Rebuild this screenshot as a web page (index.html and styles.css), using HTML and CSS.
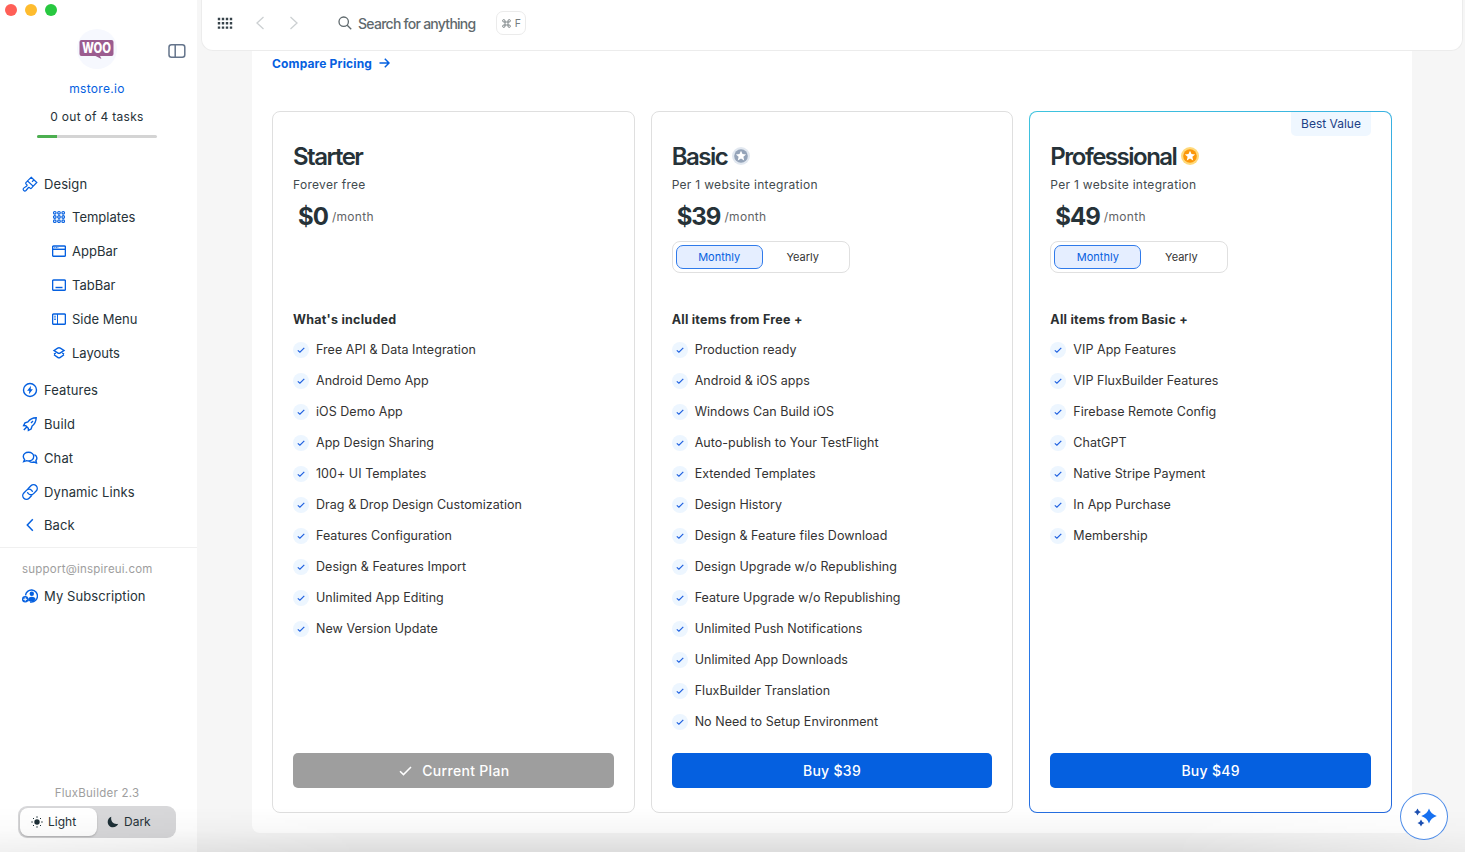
FILE: index.html
```
<!DOCTYPE html>
<html lang="en">
<head>
<meta charset="utf-8">
<title>FluxBuilder</title>
<link rel="stylesheet" href="styles.css">
</head>
<body>
<svg class="defs" width="0" height="0">
  <symbol id="tick" viewBox="0 0 16 16"><circle cx="8" cy="8" r="8" fill="#edf6ff"/><path d="M4.800 8.400 6.900 10.200 11.300 5.900" fill="none" stroke="#1d5fe0" stroke-width="1.200"/></symbol>
  <symbol id="badge" viewBox="0 0 18 18"><circle cx="9" cy="9" r="9" class="halo"/><circle cx="9" cy="9" r="6.800" fill="currentColor"/><path fill="#fff" d="m9 3.700 1.500 3.300 3.600.4-2.700 2.400.8 3.600L9 11.600l-3.200 1.800.8-3.600L3.900 7.400l3.600-.4z"/></symbol>
</svg>
<div class="app">
  <aside class="sidebar">
    <div class="lights"><i class="red"></i><i class="yellow"></i><i class="green"></i></div>
    <div class="brand">
      <svg class="woo" width="40" height="40" viewBox="0 0 40 40"><circle cx="20" cy="20" r="20" fill="#f6f8fe"/><path fill="#9b5c8f" d="M4.500 11h30a2 2 0 0 1 2 2v12a2 2 0 0 1-2 2h-11.500l1.500 3-6-3H4.500a2 2 0 0 1-2-2V13a2 2 0 0 1 2-2z"/><text x="19.500" y="24.200" text-anchor="middle" textLength="29" lengthAdjust="spacingAndGlyphs">WOO</text></svg>
      <svg class="collapse" width="18" height="14" viewBox="0 0 18 14" fill="none" stroke="#64748b" stroke-width="1.500"><rect x="1" y=".8" width="15.800" height="12.400" rx="2.500"/><path d="M7.200 1v12"/></svg>
    </div>
    <a class="site">mstore.io</a>
    <div class="tasks">0 out of 4 tasks</div>
    <div class="progress"><i></i></div>
    <nav class="nav">
      <a class="item first"><svg width="16" height="16" viewBox="0 0 16 16"><path stroke-width="1.200" d="m9.200 1.300 5.600 5.200-3.600 3.700-5.700-5.300zM12 3.900l-2 1.900M5.600 4.900 3.900 6.700c-.6.800.2 1.400.9 2 .5.600.3 1-.4 1.500l-2.700 1.900c-1.600 1.400.7 3.900 2.300 2.400L6.100 12c.6-.7 1-.8 1.500-.3.700.8 1.200 1.200 1.900.5l1.700-2"/></svg><span>Design</span></a>
      <a class="item sub"><svg width="14" height="14" viewBox="0 0 14 14"><g stroke-width="1.200"><circle cx="2.800" cy="2.800" r="1.300"/><circle cx="7" cy="2.800" r="1.300"/><circle cx="11.200" cy="2.800" r="1.300"/><circle cx="2.800" cy="7" r="1.300"/><circle cx="7" cy="7" r="1.300"/><circle cx="11.200" cy="7" r="1.300"/><circle cx="2.800" cy="11.200" r="1.300"/><circle cx="7" cy="11.200" r="1.300"/><circle cx="11.200" cy="11.200" r="1.300"/></g></svg><span>Templates</span></a>
      <a class="item sub"><svg width="14" height="14" viewBox="0 0 14 14"><rect x=".6" y="2" width="12.800" height="10.200" rx="1"/><path d="M1 5.300h12"/><path d="M2.300 3.700h4" stroke-width="1" stroke-dasharray="1 .6"/></svg><span>AppBar</span></a>
      <a class="item sub"><svg width="14" height="14" viewBox="0 0 14 14"><rect x=".6" y="2" width="12.800" height="10.200" rx="1"/><path d="M3.500 9.500h7"/></svg><span>TabBar</span></a>
      <a class="item sub"><svg width="14" height="14" viewBox="0 0 14 14"><rect x=".6" y="2" width="12.800" height="10.200" rx="1"/><path d="M5.500 2v10" stroke-width="1"/><path d="M3 3.700v5" stroke-width="1.500" stroke-dasharray="1 .7"/></svg><span>Side Menu</span></a>
      <a class="item sub"><svg width="14" height="14" viewBox="0 0 14 14"><path d="M2 4.500 5.700 2.200q1.300-.8 2.600 0L12 4.500 8.300 6.900q-1.300.8-2.600 0zM3.800 7 2 8.200M10.200 7 12 8.200M2 8.800l3.700 2.600q1.300.9 2.600 0L12 8.800"/></svg><span>Layouts</span></a>
      <a class="item main"><svg width="16" height="16" viewBox="0 0 16 16"><circle cx="8" cy="8" r="6.500"/><path d="M9 3.700 5.100 8.700h2.200L6.900 12.300 10.900 7.300H8.700z" fill="currentColor" stroke="none"/></svg><span>Features</span></a>
      <a class="item"><svg width="16" height="16" viewBox="0 0 16 16"><path d="M14.200 1.800c-3.800.1-6.400 1.500-8.300 4.100L3 6.900l-1.400 2.700 2.200.1 2.500 2.500.1 2.200 2.700-1.400 1-3c2.600-1.900 4-4.400 4.100-8.200zM4.500 11.200l-2.700 2.900M9 7l2-2"/></svg><span>Build</span></a>
      <a class="item"><svg width="16" height="16" viewBox="0 0 16 16"><path d="M6.500 2.300c3 0 5.200 1.800 5.200 4.300S9.500 11 6.500 11q-1 0-1.900-.3L1.700 11.700l.9-2.200Q1.300 8.300 1.300 6.600c0-2.500 2.200-4.300 5.200-4.300zM12.500 4.700c1.500.7 2.400 1.900 2.400 3.300q0 1.500-1 2.500l.6 2.400-2.500-.9q-2.600.9-4.500-.5"/></svg><span>Chat</span></a>
      <a class="item"><svg width="16" height="16" viewBox="0 0 16 16"><path transform="rotate(-45 8 8)" d="M7.400 11.700H3a3.700 3.700 0 0 1 0-7.400h3.600a3.700 3.700 0 0 1 3.700 3.700q0 .9-.4 1.700M8.600 4.300H13a3.700 3.700 0 0 1 0 7.400H9.400A3.700 3.700 0 0 1 5.700 8q0-.9.4-1.700"/></svg><span>Dynamic Links</span></a>
      <a class="item back"><svg width="16" height="16" viewBox="0 0 16 16"><path d="M10.800 2.300 5.300 8l5.500 5.700" stroke-width="1.500"/></svg><span>Back</span></a>
    </nav>
    <div class="account">
      <div class="mail">support@inspireui.com</div>
      <a class="item"><svg width="16" height="16" viewBox="0 0 16 16"><path d="M3.500 7.300a6 6 0 1 1 6 6.700H8"/><circle cx="9.800" cy="5.700" r="2.200" fill="currentColor" stroke="none"/><path d="M6.200 13.200V11c.5-1.500 2-2.200 3.600-2.200s3.300.7 3.800 2.200l-2 2.300z" fill="currentColor" stroke="none"/><circle cx="3.200" cy="11.300" r="3.200" fill="currentColor" stroke="none"/><path d="M1.300 11.300h3.800M3.200 9.400v3.800" stroke="#fff" stroke-width="1"/></svg><span>My Subscription</span></a>
    </div>
    <div class="version">FluxBuilder 2.3</div>
    <div class="theme">
      <button class="light"><svg width="12" height="12" viewBox="0 0 12 12"><circle cx="6" cy="6" r="2.700" fill="#1d2f36"/><path d="M6 .3v1.500M6 10.200v1.500M.3 6h1.500M10.200 6h1.500M2 2l1 1M9 9l1 1M2 10l1-1M9 3l1-1" stroke="#1d2f36"/></svg><span>Light</span></button>
      <button><svg width="12" height="12" viewBox="0 0 12 12"><path fill="#1d2f36" d="M4.300.8C2 1.700.7 3.700.7 6c0 3 2.400 5.300 5.300 5.300 2.400 0 4.300-1.300 5.200-3.500C7 9 3.200 5.500 4.300.8z"/></svg><span>Dark</span></button>
    </div>
  </aside>
  <div class="main-area">
    <header class="topbar">
      <svg class="grid" width="16" height="12" viewBox="0 0 16 12"><path d="M2 .800v11.200M6 .800v11.200M10 .800v11.200M14 .800v11.200" stroke="#37434a" stroke-width="2.400" stroke-dasharray="2.400 1.900"/></svg>
      <svg class="prev" width="10" height="14" viewBox="0 0 10 14"><path d="M8.500 1 2 7l6.500 6"/></svg>
      <svg class="next" width="10" height="14" viewBox="0 0 10 14"><path d="M1.500 1 8 7l-6.500 6"/></svg>
      <svg class="lens" width="14" height="14" viewBox="0 0 14 14" fill="none" stroke="#5f696d" stroke-width="1.300"><circle cx="5.700" cy="5.700" r="4.700"/><path d="m9.200 9.200 4 4"/></svg>
      <span class="search">Search for anything</span>
      <kbd><svg width="9" height="9" viewBox="0 0 9 9" fill="none" stroke="#757d80" stroke-width=".9"><path d="M3 3h3v3H3zM3 3H1.900A1.200 1.200 0 1 1 3 1.900zM6 3V1.900A1.200 1.200 0 1 1 7.100 3zM6 6h1.100A1.200 1.200 0 1 1 6 7.100zM3 6v1.100A1.200 1.200 0 1 1 1.900 6z"/></svg><span>F</span></kbd>
    </header>
    <main class="panel">
      <a class="compare"><span>Compare Pricing</span><svg width="11" height="10" viewBox="0 0 11 10" fill="none" stroke="#0560e0" stroke-width="1.500"><path d="M.5 5h9M5.800.8 10 5 5.800 9.200"/></svg></a>
      <div class="plans">
        <section class="plan">
          <h2>Starter</h2>
          <p class="note">Forever free</p>
          <div class="price"><b>$0</b><span>/month</span></div>
          <div class="period empty"></div>
          <h3>What's included</h3>
          <ul>
            <li><svg><use href="#tick"/></svg><span>Free API &amp; Data Integration</span></li>
            <li><svg><use href="#tick"/></svg><span>Android Demo App</span></li>
            <li><svg><use href="#tick"/></svg><span>iOS Demo App</span></li>
            <li><svg><use href="#tick"/></svg><span>App Design Sharing</span></li>
            <li><svg><use href="#tick"/></svg><span>100+ UI Templates</span></li>
            <li><svg><use href="#tick"/></svg><span>Drag &amp; Drop Design Customization</span></li>
            <li><svg><use href="#tick"/></svg><span>Features Configuration</span></li>
            <li><svg><use href="#tick"/></svg><span>Design &amp; Features Import</span></li>
            <li><svg><use href="#tick"/></svg><span>Unlimited App Editing</span></li>
            <li><svg><use href="#tick"/></svg><span>New Version Update</span></li>
          </ul>
          <button class="buy current"><svg width="13" height="10" viewBox="0 0 13 10"><path d="M1 5.200 4.500 8.600 12 1" fill="none" stroke="#fff" stroke-width="1.500"/></svg><span>Current Plan</span></button>
        </section>
        <section class="plan">
          <h2>Basic<svg class="silver"><use href="#badge"/></svg></h2>
          <p class="note">Per 1 website integration</p>
          <div class="price"><b>$39</b><span>/month</span></div>
          <div class="period"><span class="on">Monthly</span><span>Yearly</span></div>
          <h3>All items from Free +</h3>
          <ul>
            <li><svg><use href="#tick"/></svg><span>Production ready</span></li>
            <li><svg><use href="#tick"/></svg><span>Android &amp; iOS apps</span></li>
            <li><svg><use href="#tick"/></svg><span>Windows Can Build iOS</span></li>
            <li><svg><use href="#tick"/></svg><span>Auto-publish to Your TestFlight</span></li>
            <li><svg><use href="#tick"/></svg><span>Extended Templates</span></li>
            <li><svg><use href="#tick"/></svg><span>Design History</span></li>
            <li><svg><use href="#tick"/></svg><span>Design &amp; Feature files Download</span></li>
            <li><svg><use href="#tick"/></svg><span>Design Upgrade w/o Republishing</span></li>
            <li><svg><use href="#tick"/></svg><span>Feature Upgrade w/o Republishing</span></li>
            <li><svg><use href="#tick"/></svg><span>Unlimited Push Notifications</span></li>
            <li><svg><use href="#tick"/></svg><span>Unlimited App Downloads</span></li>
            <li><svg><use href="#tick"/></svg><span>FluxBuilder Translation</span></li>
            <li><svg><use href="#tick"/></svg><span>No Need to Setup Environment</span></li>
          </ul>
          <button class="buy">Buy $39</button>
        </section>
        <section class="plan best">
          <div class="ribbon">Best Value</div>
          <h2>Professional<svg class="gold"><use href="#badge"/></svg></h2>
          <p class="note">Per 1 website integration</p>
          <div class="price"><b>$49</b><span>/month</span></div>
          <div class="period"><span class="on">Monthly</span><span>Yearly</span></div>
          <h3>All items from Basic +</h3>
          <ul>
            <li><svg><use href="#tick"/></svg><span>VIP App Features</span></li>
            <li><svg><use href="#tick"/></svg><span>VIP FluxBuilder Features</span></li>
            <li><svg><use href="#tick"/></svg><span>Firebase Remote Config</span></li>
            <li><svg><use href="#tick"/></svg><span>ChatGPT</span></li>
            <li><svg><use href="#tick"/></svg><span>Native Stripe Payment</span></li>
            <li><svg><use href="#tick"/></svg><span>In App Purchase</span></li>
            <li><svg><use href="#tick"/></svg><span>Membership</span></li>
          </ul>
          <button class="buy">Buy $49</button>
        </section>
      </div>
    </main>
  </div>
  <div class="fade"></div>
  <button class="assist"><svg width="24" height="20" viewBox="0 0 24 20"><path fill="#1670f0" d="M16 1.500Q17.800 7.200 23.800 9 17.800 10.800 16 16.500 14.200 10.800 8.200 9 14.200 7.200 16 1.500z"/><path fill="#1c4fb0" d="M4.500 1.500Q5.300 4.200 8 5 5.300 5.800 4.500 8.500 3.700 5.800 1 5 3.700 4.200 4.500 1.500zM8 12.500q.8 2.700 3.500 3.500-2.700.8-3.500 3.500-.8-2.700-3.500-3.500 2.700-.8 3.500-3.500z"/></svg></button>
</div>
</body>
</html>
```
FILE: styles.css
```
* { box-sizing: border-box; }
body { margin: 0; font-family: Inter, "Liberation Sans", sans-serif; color: #263238; background: #f6f6f6; overflow: hidden; }
h2, h3, p, ul { margin: 0; padding: 0; }
button { border: 0; padding: 0; font-family: inherit; color: inherit; }
.defs { position: absolute; }
.app { position: relative; display: flex; width: 1465px; height: 852px; overflow: hidden; }

/* Sidebar */
.sidebar { width: 197px; height: 852px; background: #fff; display: flex; flex-direction: column; flex: none; }
.lights { display: flex; gap: 8px; padding: 4px 0 0 5px; height: 16px; }
.lights i { width: 12px; height: 12px; border-radius: 50%; }
.red { background: #ff5f57; }
.yellow { background: #febc2e; }
.green { background: #28c840; }
.brand { display: flex; align-items: center; height: 40px; margin-top: 13px; padding-left: 77px; }
.woo { overflow: visible; }
.woo text { font: 800 14px Inter, sans-serif; fill: #fff; }
.collapse { margin: 4px 0 0 51px; }
.site, .tasks { text-align: center; font-size: 12px; line-height: 20px; letter-spacing: .3px; padding-right: 3px; }
.site { color: #0560e0; margin-top: 10px; }
.tasks { margin-top: 8px; }
.progress { width: 120px; height: 3px; margin: 8px 0 0 37px; background: #d4d4d4; border-radius: 2px; overflow: hidden; }
.progress i { display: block; width: 20px; height: 3px; background: #4caf50; }
.nav { margin-top: 30px; height: 380px; border-bottom: 1px solid #f0f0f0; }
.item { display: flex; align-items: center; height: 34px; padding-left: 22px; gap: 6px; font-size: 13px; letter-spacing: .1px; }
.item svg { color: #0560e0; fill: none; stroke: currentColor; stroke-width: 1.400; flex: none; }
.item.first { height: 32px; }
.item.sub { padding-left: 52px; letter-spacing: 0; }
.item.main { margin-top: 3px; }
.item.back { height: 32px; }
.account { padding-top: 11px; }
.mail { font-size: 11.500px; line-height: 20px; letter-spacing: .22px; color: #9e9e9e; padding-left: 22px; }
.version { margin-top: auto; text-align: center; font-size: 11.500px; line-height: 18px; letter-spacing: .25px; color: #9e9e9e; padding-right: 3px; }
.theme { display: flex; width: 158px; height: 32px; margin: 4px 0 14px 18px; padding: 2px; background: #d8d8da; border-radius: 9px; font-size: 12px; }
.theme button { display: flex; align-items: center; gap: 5px; flex: 1; padding: 0 0 1px 8px; background: none; font-size: 12px; border-radius: 8px; }
.theme .light { flex: 0 0 77px; background: #fff; padding-left: 11px; box-shadow: 0 1px 2px rgba(0,0,0,.2); margin-right: 2px; }

/* Top bar */
.main-area { flex: 1; padding: 0 2px 0 4px; }
.topbar { display: flex; align-items: center; height: 51px; padding: 0 15px 4px 14px; background: #fff; border: 1px solid #ececec; border-top: 0; border-radius: 0 0 12px 12px; }
.prev, .next { fill: none; stroke: #ccd0d2; stroke-width: 1.300; }
.grid { margin-left: .5px; }
.prev { margin-left: 22px; }
.next { margin-left: 24px; }
.lens { margin-left: 39px; }
.search { margin-left: 6.500px; font-size: 14px; font-weight: 500; letter-spacing: -.74px; color: #5f696d; }
kbd { display: flex; align-items: center; justify-content: center; gap: 4px; width: 30px; height: 24px; margin-left: 21px; border: 1px solid #ebebeb; border-radius: 7px; font: 10.500px Inter, sans-serif; color: #757d80; }

/* Pricing panel */
.panel { width: 1160px; height: 782px; margin-left: 51px; padding: 2px 20px 20px; background: #fff; border-radius: 0 0 8px 8px; }
.compare { display: flex; align-items: center; gap: 7px; height: 20px; font-size: 12px; font-weight: 700; letter-spacing: .15px; color: #0560e0; }
.plans { display: grid; grid-template-columns: repeat(3, 1fr); gap: 16px; margin-top: 38px; }
.plan { position: relative; display: flex; flex-direction: column; height: 702px; padding: 28px 20px 24px; background: #fff; border: 1px solid #dfdfdf; border-radius: 8px; }
.plan.best { border-color: transparent; background: linear-gradient(#fff, #fff) padding-box, linear-gradient(160deg, #3fc4de, #2979e8 65%, #2468dc) border-box; }
.ribbon { position: absolute; top: 0; right: 20px; width: 80px; height: 24px; line-height: 24px; text-align: center; font-size: 12px; letter-spacing: 0; color: #1c3f86; background: #eff7ff; border-radius: 0 0 5px 5px; }
h2 { display: flex; align-items: center; height: 32px; font-size: 24px; font-weight: 600; letter-spacing: -1.500px; }
h2 svg { width: 18px; height: 18px; margin-left: 5px; }
.silver { color: #94a3b8; fill: #e2e8f0; }
.gold { color: #fb9709; fill: #ffd97a; }
.note { height: 20px; margin-top: 3px; font-size: 12px; line-height: 20px; letter-spacing: .3px; color: #424a4e; }
.price { display: flex; align-items: center; height: 36px; margin-top: 3px; padding-left: 5px; }
.price b { font-size: 24px; font-weight: 700; letter-spacing: -1px; }
.price span { margin-left: 4px; font-size: 12px; letter-spacing: .3px; color: #5f6366; }
.period { display: flex; width: 178px; height: 32px; margin-top: 7px; padding: 3px; border: 1px solid #e0e0e0; border-radius: 8px; font-size: 11px; line-height: 24px; text-align: center; color: #333; }
.period span { width: 80px; }
.period .on { width: 87px; border: 1px solid #2f7aea; border-radius: 7px; background: #e5eeff; color: #0560e0; line-height: 22px; }
.period.empty { visibility: hidden; }
h3 { height: 20px; margin: 37px 0 4px; font-size: 12.500px; line-height: 20px; font-weight: 700; letter-spacing: .25px; color: #2b2f31; }
ul { list-style: none; }
li { display: flex; align-items: center; gap: 7px; height: 31px; font-size: 12.500px; letter-spacing: .04px; color: #333; }
li svg { width: 16px; height: 16px; }
.buy { display: flex; align-items: center; justify-content: center; gap: 10px; height: 35px; margin-top: auto; border-radius: 5px; background: #0560e0; color: #fff; font-size: 14px; font-weight: 500; letter-spacing: .3px; }
.buy.current { background: #9e9e9e; padding-left: 2px; }

/* Layers above the page */
.fade { position: absolute; left: 0; right: 0; bottom: 0; height: 44px; background: linear-gradient(rgba(0,0,0,0), rgba(0,0,0,.03) 50%, rgba(0,0,0,.1)); pointer-events: none; -webkit-mask-image: linear-gradient(90deg, rgba(0,0,0,.55), #000 25%, #000 80%, rgba(0,0,0,.4)); mask-image: linear-gradient(90deg, rgba(0,0,0,.55), #000 25%, #000 80%, rgba(0,0,0,.4)); }
.assist { position: absolute; left: 1400px; top: 793px; width: 48px; height: 47px; padding-left: 1px; display: flex; align-items: center; justify-content: center; background: #fff; border: 1px solid #4d8ce8; border-radius: 50%; }
```
